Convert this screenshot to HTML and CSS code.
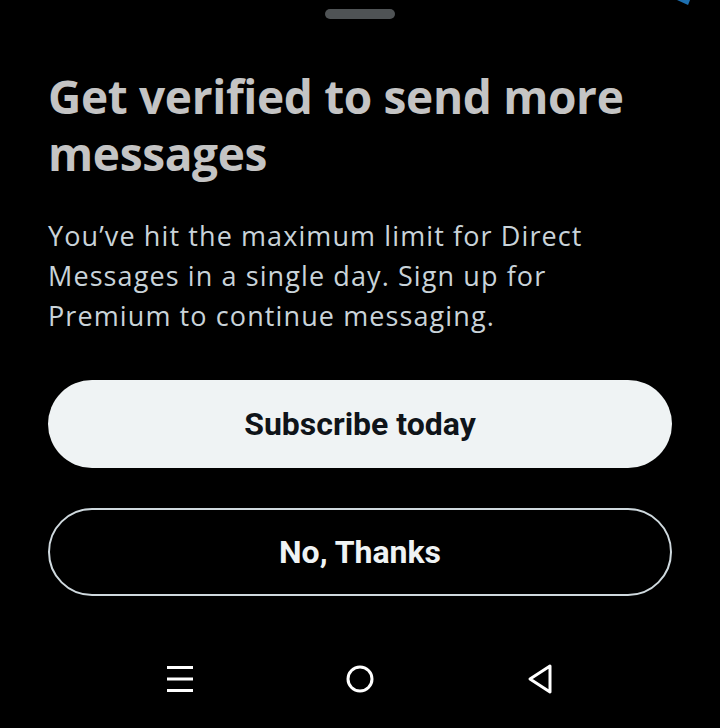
FILE: index.html
```html
<!DOCTYPE html>
<html lang="en">
<head>
    <meta charset="UTF-8">
    <meta name="viewport" content="width=device-width, initial-scale=1.0">
    <title>Get verified</title>
    <link rel="stylesheet" href="styles.css">
</head>
<body>

<div class="sheet">
    <div class="corner"></div>
    <div class="handle"></div>

    <div class="content">
        <h1>Get verified to send more messages</h1>
        <p>You’ve hit the maximum limit for Direct Messages in a single day. Sign up for Premium to continue messaging.</p>

        <button class="btn primary">Subscribe today</button>
        <button class="btn outline">No, Thanks</button>
    </div>

    <nav class="navbar">
        <svg width="28" height="28" viewBox="0 0 28 28">
            <rect x="1" y="1" width="26" height="3" fill="#fff"/>
            <rect x="1" y="12.5" width="26" height="3" fill="#fff"/>
            <rect x="1" y="24" width="26" height="3" fill="#fff"/>
        </svg>
        <svg width="30" height="30" viewBox="0 0 30 30">
            <circle cx="15" cy="15" r="12" fill="none" stroke="#fff" stroke-width="3"/>
        </svg>
        <svg width="28" height="32" viewBox="0 0 28 32">
            <path d="M24 3 L4 16 L24 29 Z" fill="none" stroke="#fff" stroke-width="3" stroke-linejoin="round"/>
        </svg>
    </nav>
</div>

</body>
</html>
```

FILE: styles.css
```css
body {
    margin: 0;
    padding: 0;
    background-color: #000;
    font-family: "Open Sans", Roboto, sans-serif;
}

.sheet {
    position: relative;
    width: 720px;
    height: 728px;
    overflow: hidden;
}

.corner {
    position: absolute;
    top: 0;
    left: 677px;
    width: 13px;
    height: 5px;
    background-color: #1d6fb0;
    clip-path: polygon(0 0, 100% 0, 85% 100%);
}

.handle {
    width: 70px;
    height: 10px;
    margin: 9px auto 0;
    background-color: #4f5355;
    border-radius: 5px;
}

.content {
    padding: 0 48px;
}

h1 {
    margin: 49px 0 0;
    font-size: 46px;
    font-weight: 700;
    line-height: 57px;
    color: #c4c4c4;
    letter-spacing: -0.35px;
}

p {
    margin: 34px 0 0;
    font-size: 27px;
    line-height: 40px;
    letter-spacing: 1.1px;
    color: #c9d3d9;
}

.btn {
    display: block;
    width: 100%;
    height: 88px;
    border-radius: 44px;
    font-family: Roboto, sans-serif;
    font-size: 32px;
    font-weight: 700;
    cursor: pointer;
}

.primary {
    margin-top: 44px;
    background-color: #eff3f4;
    color: #0f1419;
    border: none;
}

.outline {
    margin-top: 40px;
    background-color: #000;
    color: #eff3f4;
    border: 2px solid #cfd9de;
}

.navbar {
    position: absolute;
    left: 0;
    right: 0;
    bottom: 33px;
    display: flex;
    justify-content: space-between;
    align-items: center;
    padding: 0 166px;
}
```
